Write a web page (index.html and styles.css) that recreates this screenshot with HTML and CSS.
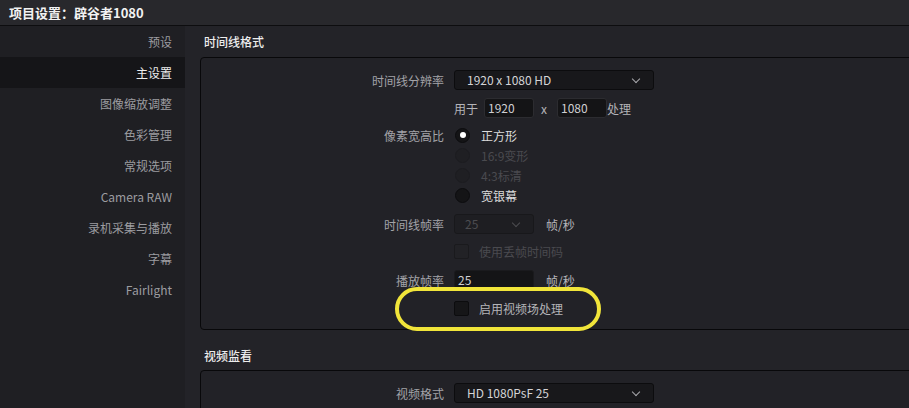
FILE: index.html
```html
<!DOCTYPE html>
<html lang="zh-CN">
<head>
    <meta charset="UTF-8">
    <title>项目设置</title>
    <link rel="stylesheet" href="styles.css">
</head>
<body>
    <div class="title-bar">项目设置：辟谷者1080</div>

    <div class="layout">
        <ul class="side-nav">
            <li>预设</li>
            <li class="active">主设置</li>
            <li>图像缩放调整</li>
            <li>色彩管理</li>
            <li>常规选项</li>
            <li>Camera RAW</li>
            <li>录机采集与播放</li>
            <li>字幕</li>
            <li>Fairlight</li>
        </ul>

        <div class="content">
            <h2 class="section-title">时间线格式</h2>
            <div class="panel">
                <div class="row">
                    <span class="label">时间线分辨率</span>
                    <div class="select wide">1920 x 1080 HD<span class="chevron"></span></div>
                </div>
                <div class="row">
                    <span class="label"></span>
                    <div class="inline">
                        <span class="text">用于</span>
                        <div class="input">1920</div>
                        <span class="text sep">x</span>
                        <div class="input">1080</div>
                        <span class="text">处理</span>
                    </div>
                </div>
                <div class="row radio-row first-radio">
                    <span class="label">像素宽高比</span>
                    <div class="inline"><span class="radio checked"></span><span class="text bright">正方形</span></div>
                </div>
                <div class="row radio-row">
                    <span class="label"></span>
                    <div class="inline"><span class="radio disabled"></span><span class="text dim">16:9变形</span></div>
                </div>
                <div class="row radio-row">
                    <span class="label"></span>
                    <div class="inline"><span class="radio disabled"></span><span class="text dim">4:3标清</span></div>
                </div>
                <div class="row radio-row last-radio">
                    <span class="label"></span>
                    <div class="inline"><span class="radio"></span><span class="text bright">宽银幕</span></div>
                </div>
                <div class="row tight">
                    <span class="label">时间线帧率</span>
                    <div class="inline">
                        <div class="select small disabled">25<span class="chevron"></span></div>
                        <span class="text unit">帧/秒</span>
                    </div>
                </div>
                <div class="row loose">
                    <span class="label"></span>
                    <div class="inline"><span class="checkbox disabled"></span><span class="text dim">使用丢帧时间码</span></div>
                </div>
                <div class="row">
                    <span class="label">播放帧率</span>
                    <div class="inline">
                        <div class="input small">25</div>
                        <span class="text unit">帧/秒</span>
                    </div>
                </div>
                <div class="row last">
                    <span class="label"></span>
                    <div class="inline"><span class="checkbox"></span><span class="text">启用视频场处理</span></div>
                </div>
                <div class="highlight"></div>
            </div>

            <h2 class="section-title second">视频监看</h2>
            <div class="panel">
                <div class="row last">
                    <span class="label">视频格式</span>
                    <div class="select wide">HD 1080PsF 25<span class="chevron"></span></div>
                </div>
            </div>
        </div>
    </div>
</body>
</html>
```

FILE: styles.css
```css
body {
    margin: 0;
    width: 909px;
    height: 408px;
    overflow: hidden;
    background: #232328;
    color: #a3a3a7;
    font-family: "Noto Sans CJK SC", "Noto Sans", sans-serif;
    font-size: 12px;
}

.title-bar {
    height: 25px;
    line-height: 25px;
    padding-left: 9px;
    background: #28282c;
    border-bottom: 1px solid #0d0d0f;
    color: #f2f2f2;
    font-size: 13px;
    font-weight: 700;
}

.layout {
    display: flex;
    height: 382px;
}

.side-nav {
    list-style: none;
    margin: 0;
    padding: 0;
    width: 185px;
    flex-shrink: 0;
    background: #1f1f23;
}

.side-nav li {
    height: 31px;
    line-height: 31px;
    padding-right: 13px;
    text-align: right;
    color: #9c9ca0;
    font-size: 12px;
}

.side-nav li.active {
    background: #151518;
    color: #ececec;
}

.content {
    flex: 1;
    padding-left: 15px;
    overflow: hidden;
}

.section-title {
    margin: 0;
    padding: 8px 0 7px 4px;
    line-height: 16px;
    font-size: 12px;
    font-weight: 500;
    color: #ededed;
}

.section-title.second {
    padding-top: 18px;
    padding-bottom: 6px;
}

.panel {
    position: relative;
    margin-right: -30px;
    padding: 12px 0 11px;
    background: #222227;
    border: 1px solid #08080a;
    border-radius: 4px;
}

.row {
    display: grid;
    grid-template-columns: 243px 1fr;
    column-gap: 10px;
    align-items: center;
    height: 20px;
    margin-bottom: 8px;
}

.row.first-radio {
    margin-top: -1px;
}

.row.radio-row {
    margin-bottom: 0;
}

.row.last-radio {
    margin-bottom: 9px;
}

.row.tight {
    margin-bottom: 7px;
}

.row.loose {
    margin-bottom: 9px;
}

.row.last {
    margin-bottom: 0;
}

.label {
    text-align: right;
    color: #a3a3a7;
}

.inline {
    display: flex;
    align-items: center;
}

.text {
    color: #b4b4b8;
}

.text.bright {
    color: #dcdcdc;
    margin-left: 11px;
}

.text.dim {
    color: #4a4a4f;
    margin-left: 11px;
}

.checkbox + .text {
    margin-left: 10px;
}

.text.sep {
    margin: 0 4px 0 7px;
}

.text.unit {
    margin-left: 12px;
}

.select {
    position: relative;
    box-sizing: border-box;
    height: 20px;
    line-height: 18px;
    padding-left: 12px;
    background: #18181b;
    border: 1px solid #0c0c0e;
    border-radius: 3px;
    color: #d4d4d6;
}

.select.wide {
    width: 200px;
}

.select.small {
    width: 80px;
    padding-left: 10px;
}

.select.disabled {
    background: #1e1e22;
    border-color: #18181b;
    color: #4c4c50;
}

.chevron {
    position: absolute;
    right: 14px;
    top: 5px;
    width: 5px;
    height: 5px;
    border-right: 1.5px solid #a8a8ac;
    border-bottom: 1.5px solid #a8a8ac;
    transform: rotate(45deg);
}

.select.disabled .chevron {
    border-color: #4c4c50;
}

.input {
    box-sizing: border-box;
    width: 50px;
    height: 20px;
    line-height: 18px;
    margin-left: 6px;
    padding-left: 3px;
    background: #141416;
    border: 1px solid #2c2c30;
    border-radius: 3px;
    color: #cfcfd1;
}

.input.small {
    width: 80px;
    margin-left: 0;
    border-color: #1a1a1d;
}

.radio {
    box-sizing: border-box;
    width: 15px;
    height: 15px;
    margin-left: 1px;
    border-radius: 50%;
    background: #141416;
    border: 1px solid #0c0c0e;
    display: flex;
    align-items: center;
    justify-content: center;
}

.radio.checked::after {
    content: "";
    width: 6px;
    height: 6px;
    border-radius: 50%;
    background: #ffffff;
}

.radio.disabled {
    background: #1f1f23;
    border-color: #1c1c20;
}

.checkbox {
    box-sizing: border-box;
    width: 15px;
    height: 15px;
    background: #161618;
    border: 1px solid #0c0c0e;
    border-radius: 2px;
}

.checkbox.disabled {
    background: #222226;
    border-color: #1a1a1d;
}

.highlight {
    position: absolute;
    left: 194px;
    top: 229px;
    width: 198px;
    height: 36px;
    border: 4px solid #f1e53a;
    border-radius: 24px;
}
```
